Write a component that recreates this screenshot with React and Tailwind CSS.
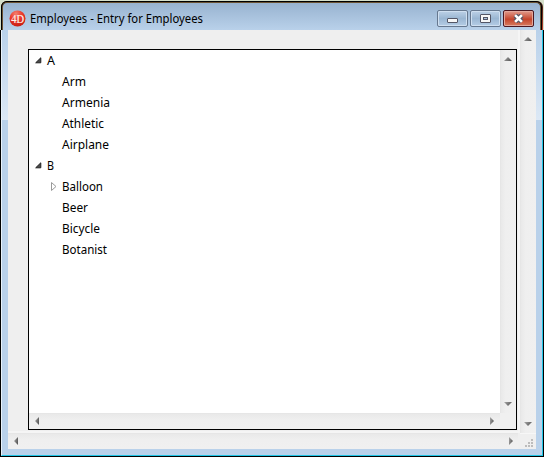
import React from 'react';

function Arrow({ dir, className = '' }) {
  const points = {
    up: '0,4 4,0 8,4',
    down: '0,0 8,0 4,4',
    left: '4,0 4,8 0,4',
    right: '0,0 4,4 0,8',
  };
  const vertical = dir === 'up' || dir === 'down';
  return (
    <svg
      className={`shrink-0 ${className}`}
      width={vertical ? 8 : 4}
      height={vertical ? 4 : 8}
      viewBox={vertical ? '0 0 8 4' : '0 0 4 8'}
    >
      <defs>
        <linearGradient id={`arrow-${dir}`} x1="0" y1="0" x2="1" y2="0.4">
          <stop offset="0" stopColor="#a9a9a9" />
          <stop offset="1" stopColor="#5c5c5c" />
        </linearGradient>
      </defs>
      <polygon points={points[dir]} fill={`url(#arrow-${dir})`} />
    </svg>
  );
}

function VerticalBar({ className = '' }) {
  return (
    <div
      className={`flex flex-col items-center justify-between border-l border-[#e6e6e6] bg-linear-to-r from-[#e9e9e9] from-0% via-[#efefef] via-30% to-[#f0f0f0] pr-[2px] ${className}`}
    >
      <Arrow dir="up" />
      <Arrow dir="down" />
    </div>
  );
}

function HorizontalBar({ className = '' }) {
  return (
    <div
      className={`flex items-center justify-between border-t border-[#e6e6e6] bg-linear-to-b from-[#e9e9e9] from-0% via-[#efefef] via-40% to-[#f0f0f0] pb-[2px] ${className}`}
    >
      <Arrow dir="left" />
      <Arrow dir="right" />
    </div>
  );
}

function Logo() {
  return (
    <svg className="ml-[6px] shrink-0" width="17" height="17" viewBox="0 0 17 17">
      <defs>
        <radialGradient id="logo" cx="0.4" cy="0.2" r="0.8">
          <stop offset="0" stopColor="#f3806f" />
          <stop offset="0.5" stopColor="#e9392b" />
          <stop offset="1" stopColor="#c91d13" />
        </radialGradient>
      </defs>
      <circle cx="8.5" cy="8.5" r="8" fill="url(#logo)" />
      <text
        className="font-['Liberation_Serif',serif] text-[12px]"
        x="2.2"
        y="12.6"
        textLength="12.8"
        lengthAdjust="spacingAndGlyphs"
        fill="#fff0ec"
        stroke="#fff0ec"
        strokeWidth="0.2"
      >
        4D
      </text>
    </svg>
  );
}

function CaptionButton({ kind }) {
  const close = kind === 'close';
  return (
    <div
      className={`flex h-[17px] w-[31px] items-center justify-center rounded-xs border ${
        close
          ? 'border-[#4c1720] bg-linear-to-b from-[#e09a8c] from-0% via-[#c4432b] via-55% to-[#d77b5f] shadow-[inset_0_0_0_1px_#e3a79b]'
          : 'border-[#66788f] bg-linear-to-b from-[#bdd1e7] from-0% via-[#9ab6d2] via-50% to-[#b5cde6] shadow-[inset_0_0_0_1px_#cfdff0]'
      }`}
    >
      {kind === 'minimize' && (
        <svg className="translate-y-[2px]" width="11" height="5" viewBox="0 0 11 5">
          <rect x="0.5" y="0.5" width="10" height="4" rx="0.5" fill="#f7f7f7" stroke="#535666" />
        </svg>
      )}
      {kind === 'maximize' && (
        <svg width="11" height="9" viewBox="0 0 11 9">
          <rect x="0.5" y="0.5" width="10" height="8" rx="0.5" fill="#f7f7f7" stroke="#535666" />
          <rect x="3.5" y="3.5" width="4" height="2" fill="#a9c1dc" stroke="#535666" />
        </svg>
      )}
      {close && (
        <svg width="13" height="9" viewBox="0 0 13 9">
          <path d="M3.2 1.2L9.8 7.8M9.8 1.2L3.2 7.8" stroke="#535666" strokeWidth="4.8" />
          <path d="M3.1 1.1L9.9 7.9M9.9 1.1L3.1 7.9" stroke="#fff" strokeWidth="2.6" />
        </svg>
      )}
    </div>
  );
}

function Row({ level, state, label, width }) {
  return (
    <div className={`flex h-[21px] items-center ${level ? 'pl-[21px]' : 'pl-[6px]'}`}>
      <div className="w-[12px] shrink-0">
        {state === 'open' && (
          <svg width="7" height="7" viewBox="0 0 7 7">
            <polygon points="0.7,5.8 5.8,0.8 5.8,5.8" fill="#4b4b4b" stroke="#222" />
          </svg>
        )}
        {state === 'closed' && (
          <svg className="ml-[1px]" width="6" height="9" viewBox="0 0 6 9">
            <polygon points="0.5,0.5 5,4.5 0.5,8.5" fill="#fff" stroke="#9a9a9a" />
          </svg>
        )}
      </div>
      <svg className="overflow-visible" width={width} height="21">
        <text x="0" y="15" textLength={width} lengthAdjust="spacingAndGlyphs">
          {label}
        </text>
      </svg>
    </div>
  );
}

const rows = [
  { level: 0, state: 'open', label: 'A', width: 8 },
  { level: 1, label: 'Arm', width: 24 },
  { level: 1, label: 'Armenia', width: 48 },
  { level: 1, label: 'Athletic', width: 42 },
  { level: 1, label: 'Airplane', width: 47 },
  { level: 0, state: 'open', label: 'B', width: 7 },
  { level: 1, state: 'closed', label: 'Balloon', width: 41 },
  { level: 1, label: 'Beer', width: 26 },
  { level: 1, label: 'Bicycle', width: 38 },
  { level: 1, label: 'Botanist', width: 45 },
];

export default function App() {
  return (
    <div className="flex h-[457px] w-[544px] flex-col overflow-hidden bg-black font-['Noto_Sans',sans-serif] text-[12px] text-black">
      <header className="h-[30px] bg-[#d5dfca] px-px pt-px">
        <div className="h-[29px] rounded-t-md bg-linear-to-b from-[#3a1a12] to-[#c2402a] pr-px">
          <div className="h-[29px] rounded-t-md bg-black px-px pt-px">
            <div className="flex h-[28px] items-start rounded-t-[5px] border-x border-t border-[#6b5434] bg-linear-to-b from-[#98b3d0] to-[#b9d1ea] pt-[7px]">
              <Logo />
              <svg className="ml-[4px] overflow-visible" width="173" height="17">
                <text x="0" y="13" textLength="173" lengthAdjust="spacingAndGlyphs">
                  Employees - Entry for Employees
                </text>
              </svg>
              <div className="mr-[6px] ml-auto flex gap-[2px]">
                <CaptionButton kind="minimize" />
                <CaptionButton kind="maximize" />
                <CaptionButton kind="close" />
              </div>
            </div>
          </div>
        </div>
      </header>

      <div className="flex h-[426px] border-r border-l border-r-black border-l-black">
        <div className="flex w-[542px] border-r border-b border-l border-r-[#20c5e6] border-b-[#20c5e6] border-l-[#e8f2fb] bg-[#b9d1ea]">
          <div className="h-[90px] w-[6px] shrink-0 bg-linear-to-b from-[#b9d1ea] to-[#dce8f5]" />
          <div className="grid h-[419px] w-[528px] shrink-0 grid-cols-[512px_16px] grid-rows-[403px_16px] bg-[#efefef]">
            <main className="border-r-2 border-b-2 border-[#f5f5f5] pt-[19px] pl-[20px]">
              <section className="grid h-[381px] w-[489px] grid-cols-[471px_16px] grid-rows-[363px_16px] border border-black bg-[#f0f0f0]">
                <div className="bg-white">
                  {rows.map((row) => (
                    <Row key={row.label} {...row} />
                  ))}
                </div>
                <VerticalBar className="pt-[7px] pb-[7px]" />
                <HorizontalBar className="pr-[6px] pl-[6px]" />
              </section>
            </main>
            <VerticalBar className="pt-[7px] pb-[7px]" />
            <HorizontalBar className="mr-[2px] pr-[5px] pl-[6px]" />
            <div className="flex items-end justify-end border-t border-[#f7f7f7] pr-[3px] pb-[2px]">
              <svg width="8" height="8" viewBox="0 0 8 8" fill="#bcbcbc">
                <path d="M6 0h2v2H6zM3 3h2v2H3zM6 3h2v2H6zM0 6h2v2H0zM3 6h2v2H3zM6 6h2v2H6z" />
              </svg>
            </div>
          </div>
          <div className="h-[90px] grow bg-linear-to-b from-[#b9d1ea] to-[#dce8f5]" />
        </div>
      </div>
      <footer className="h-px bg-black" />
    </div>
  );
}
